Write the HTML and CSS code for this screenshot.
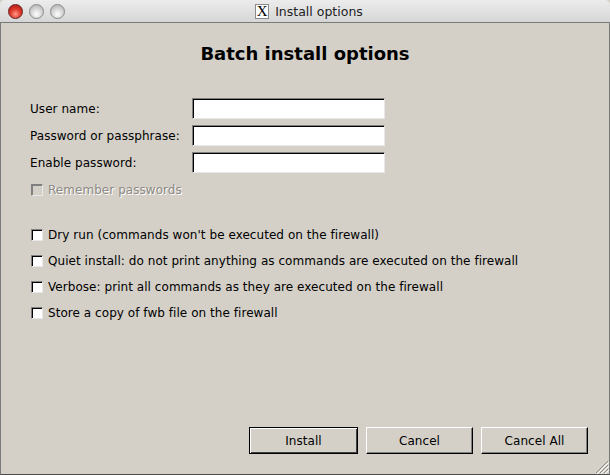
FILE: index.html
```html
<!DOCTYPE html>
<html>
<head>
<meta charset="utf-8">
<link rel="stylesheet" href="styles.css">
</head>
<body>
<div class="window">
  <div class="titlebar">
    <div class="lights">
      <span class="light red"></span>
      <span class="light grey"></span>
      <span class="light grey"></span>
    </div>
    <div class="title"><span class="xicon">X</span><span>Install options</span></div>
  </div>
  <div class="content">
    <h1 class="heading">Batch install options</h1>
    <div class="form">
      <label class="label">User name:</label><div class="input"></div>
      <label class="label">Password or passphrase:</label><div class="input"></div>
      <label class="label">Enable password:</label><div class="input"></div>
    </div>
    <div class="check disabled remember"><span class="box"></span><span>Remember passwords</span></div>
    <div class="checks">
      <div class="check"><span class="box"></span><span>Dry run (commands won't be executed on the firewall)</span></div>
      <div class="check"><span class="box"></span><span>Quiet install: do not print anything as commands are executed on the firewall</span></div>
      <div class="check"><span class="box"></span><span>Verbose: print all commands as they are executed on the firewall</span></div>
      <div class="check"><span class="box"></span><span>Store a copy of fwb file on the firewall</span></div>
    </div>
    <div class="buttons">
      <div class="btn default">Install</div>
      <div class="btn">Cancel</div>
      <div class="btn">Cancel All</div>
    </div>
    <svg class="grip" width="14" height="14" viewBox="0 0 14 14">
      <path d="M13 1 L1 13 M13 5 L5 13 M13 9 L9 13" stroke="#8a8a8a" stroke-width="1"/>
      <path d="M14 2 L2 14 M14 6 L6 14 M14 10 L10 14" stroke="#ffffff" stroke-width="1"/>
    </svg>
  </div>
</div>
</body>
</html>
```

FILE: styles.css
```css
html, body {
  margin: 0;
  padding: 0;
  background: #d4d0c8;
}
.window {
  width: 610px;
  height: 475px;
  display: flex;
  flex-direction: column;
  font-family: "DejaVu Sans", sans-serif;
  font-size: 12px;
  letter-spacing: 0.05px;
  color: #000;
}
.titlebar {
  height: 22px;
  border-bottom: 1px solid #7a7a7a;
  background: linear-gradient(#ececec, #d6d6d6);
  border-radius: 5px 5px 0 0;
  display: flex;
  align-items: center;
  position: relative;
  flex: none;
}
.lights {
  display: flex;
  gap: 6px;
  padding-left: 8px;
}
.light {
  width: 15px;
  height: 15px;
  border-radius: 50%;
  box-sizing: border-box;
}
.light.red {
  background: radial-gradient(circle at 50% 70%, #ff9a8a 0%, #e03a2a 45%, #9a1010 100%);
  border: 1px solid #6a2020;
}
.light.grey {
  background: radial-gradient(circle at 50% 70%, #ffffff 0%, #d8d8d8 45%, #a8a8a8 100%);
  border: 1px solid #8a8a8a;
}
.title {
  position: absolute;
  left: 0;
  right: 0;
  top: 0;
  height: 22px;
  display: flex;
  justify-content: center;
  align-items: center;
  gap: 6px;
  font-family: "DejaVu Sans", sans-serif;
  font-size: 12.5px;
  letter-spacing: 0;
  color: #222;
  padding-left: 8px;
  box-sizing: border-box;
}
.xicon {
  width: 12px;
  height: 13px;
  border: 1px solid #8a8a8a;
  background: #fff;
  font-family: "Liberation Serif", serif;
  font-size: 15px;
  line-height: 13px;
  text-align: center;
  color: #000;
}
.content {
  flex: 1;
  position: relative;
  border-left: 1px solid #7a7a7a;
  border-right: 1px solid #7a7a7a;
  border-bottom: 1px solid #4a4a4a;
  display: flex;
  flex-direction: column;
  padding: 20px 21px 20px 29px;
}
.heading {
  margin: 0 0 0 -8px;
  font-size: 18px;
  font-weight: bold;
  line-height: 22px;
  letter-spacing: 0;
  text-align: center;
}
.form {
  margin-top: 33px;
  display: grid;
  grid-template-columns: 162px 193px;
  row-gap: 6px;
  align-items: center;
}
.label {
  line-height: 14px;
}
.input {
  height: 21px;
  box-sizing: border-box;
  background: #fff;
  border: 1px solid;
  border-color: #808080 #e8e8e8 #e8e8e8 #808080;
  box-shadow: inset 1px 1px #000;
}
.check {
  display: flex;
  align-items: center;
  gap: 5px;
  height: 14px;
  line-height: 14px;
  padding-left: 1px;
}
.remember {
  margin-top: 10px;
}
.box {
  width: 12px;
  height: 12px;
  box-sizing: border-box;
  background: #fff;
  border: 1px solid;
  border-color: #808080 #e8e8e8 #e8e8e8 #808080;
  box-shadow: inset 1px 1px #000;
  flex: none;
}
.disabled {
  color: #8e8a84;
  text-shadow: 1px 1px #ffffff;
}
.disabled .box {
  background: #d4d0c8;
  box-shadow: inset 1px 1px #808080;
}
.checks {
  margin-top: 31px;
  display: flex;
  flex-direction: column;
  gap: 12px;
}
.buttons {
  margin-top: auto;
  display: flex;
  justify-content: flex-end;
  gap: 8px;
}
.btn {
  width: 107px;
  height: 27px;
  box-sizing: border-box;
  display: flex;
  align-items: center;
  justify-content: center;
  border: 1px solid;
  border-color: #ffffff #000000 #000000 #ffffff;
  box-shadow: inset -1px -1px #808080;
  color: #000;
}
.btn.default {
  width: 109px;
  border-color: #000;
  box-shadow: inset 1px 1px #fff, inset -1px -1px #404040;
}
.grip {
  position: absolute;
  right: 0;
  bottom: 0;
}
```
